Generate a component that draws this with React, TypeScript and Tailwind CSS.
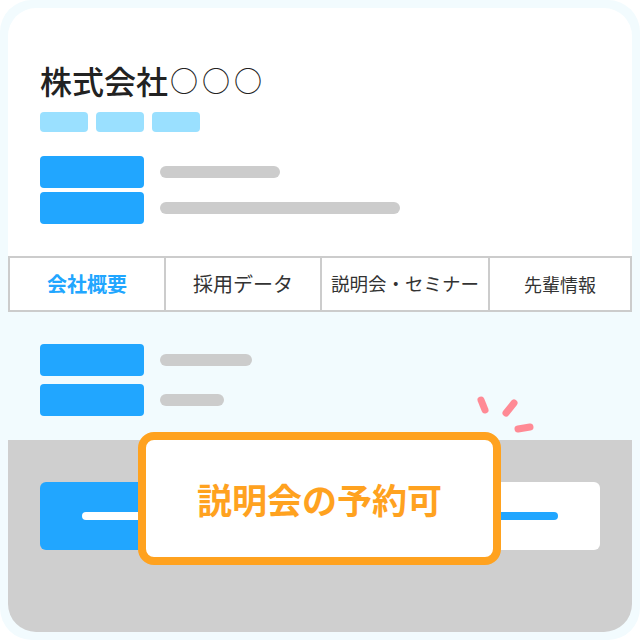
import React from "react";

const font = { fontFamily: '"Noto Sans CJK JP", "Noto Sans", sans-serif' };

export default function App() {
  return (
    <div className="w-[640px] h-[640px] bg-white" style={font}>
      <div className="relative w-full h-full rounded-[32px] bg-[#f2fbfe] p-2">
        <div className="flex flex-col h-full rounded-[28px] overflow-hidden">
          {/* top white section */}
          <div className="bg-white px-8 pt-[52px] pb-8">
            <h1 className="h-[40px] flex items-center text-[32px] leading-[40px] font-medium text-[#222222] whitespace-nowrap">
              <span>株式会社</span>
              <span className="ml-[2px] text-[28px] leading-[40px] tracking-[4px] font-normal">○○○</span>
            </h1>
            <div className="mt-[12px] flex gap-2">
              <div className="w-12 h-5 rounded bg-[#9ae0ff]" />
              <div className="w-12 h-5 rounded bg-[#9ae0ff]" />
              <div className="w-12 h-5 rounded bg-[#9ae0ff]" />
            </div>
            <div className="mt-6 flex flex-col gap-1">
              <div className="flex items-center gap-4">
                <div className="w-[104px] h-8 rounded bg-[#21a6ff]" />
                <div className="w-[120px] h-3 rounded-full bg-[#cccccc]" />
              </div>
              <div className="flex items-center gap-4">
                <div className="w-[104px] h-8 rounded bg-[#21a6ff]" />
                <div className="w-[240px] h-3 rounded-full bg-[#cccccc]" />
              </div>
            </div>
          </div>

          {/* tabs */}
          <div className="grid grid-cols-[156px_156px_168px_1fr] h-14 border-2 border-[#cccccc] bg-white">
            <div className="flex items-center justify-center border-r-2 border-[#cccccc] text-[20px] font-bold text-[#21a6ff]">会社概要</div>
            <div className="flex items-center justify-center border-r-2 border-[#cccccc] text-[20px] text-[#333333]">採用データ</div>
            <div className="flex items-center justify-center border-r-2 border-[#cccccc] text-[18.5px] text-[#333333] whitespace-nowrap">説明会・セミナー</div>
            <div className="flex items-center justify-center text-[18px] text-[#333333]">先輩情報</div>
          </div>

          {/* middle */}
          <div className="px-8 pt-8 pb-6 flex flex-col gap-2">
            <div className="flex items-center gap-4">
              <div className="w-[104px] h-8 rounded bg-[#21a6ff]" />
              <div className="w-[92px] h-3 rounded-full bg-[#cccccc]" />
            </div>
            <div className="flex items-center gap-4">
              <div className="w-[104px] h-8 rounded bg-[#21a6ff]" />
              <div className="w-16 h-3 rounded-full bg-[#cccccc]" />
            </div>
          </div>

          {/* gray bottom */}
          <div className="flex-1 bg-[#cfcfcf] px-8 pt-[42px] flex gap-4">
            <div className="w-[272px] h-[68px] rounded-md bg-[#21a6ff] flex items-center justify-center">
              <div className="w-[188px] h-2 rounded-full bg-white" />
            </div>
            <div className="w-[272px] h-[68px] rounded-md bg-white flex items-center justify-center">
              <div className="w-[188px] h-2 rounded-full bg-[#21a6ff]" />
            </div>
          </div>
        </div>

        {/* callout */}
        <div className="absolute left-[138px] top-[432px] w-[363px] h-[133px] rounded-[16px] border-[8px] border-[#ffa21f] bg-white flex items-center justify-center">
          <span className="text-[35px] font-bold text-[#ffa21f] leading-none">説明会の予約可</span>
        </div>

        {/* sparkles */}
        <svg className="absolute left-[470px] top-[390px]" width="70" height="50" viewBox="470 390 70 50">
          <g stroke="#ff8a95" strokeWidth="7" strokeLinecap="round">
            <line x1="481" y1="400" x2="485" y2="410" />
            <line x1="514" y1="403" x2="506" y2="413" />
            <line x1="518" y1="429" x2="530" y2="427" />
          </g>
        </svg>
      </div>
    </div>
  );
}
